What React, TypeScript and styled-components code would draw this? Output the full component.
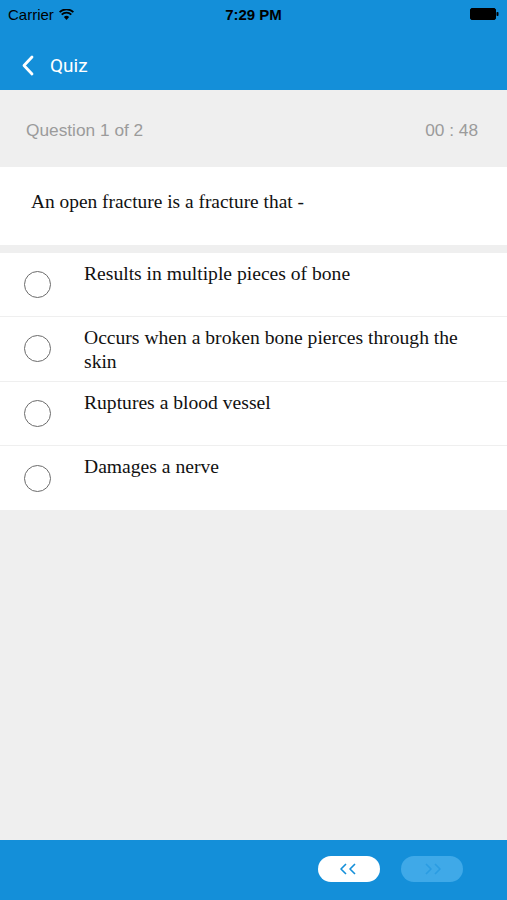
import React from "react";
import styled, { createGlobalStyle } from "styled-components";

const BLUE = "#148fd9";

const Global = createGlobalStyle`
  html, body { margin: 0; padding: 0; background: #efefef; }
  * { box-sizing: border-box; }
`;

const Screen = styled.div`
  width: 507px;
  height: 900px;
  display: flex;
  flex-direction: column;
  background: #efefef;
  overflow: hidden;
`;

const Header = styled.header`
  background: ${BLUE};
  height: 90px;
  display: flex;
  flex-direction: column;
`;

const StatusBar = styled.div`
  height: 28px;
  display: grid;
  grid-template-columns: 1fr auto 1fr;
  align-items: center;
  padding: 0 8px;
  font-family: "Liberation Sans", Arial, sans-serif;
  font-size: 15px;
  color: #000;
`;

const StatusLeft = styled.div`
  display: flex;
  align-items: center;
  gap: 5px;
`;

const StatusTime = styled.div`
  font-weight: bold;
`;

const StatusRight = styled.div`
  display: flex;
  justify-content: flex-end;
  align-items: center;
`;

const NavBar = styled.div`
  height: 62px;
  padding-top: 12px;
  display: flex;
  align-items: center;
  padding-left: 21px;
  gap: 16px;
`;

const NavTitle = styled.span`
  font-family: Roboto, "Liberation Sans", sans-serif;
  font-size: 19px;
  color: #fff;
`;

const InfoBand = styled.div`
  height: 77px;
  display: flex;
  align-items: center;
  justify-content: space-between;
  padding: 4px 29px 0 26px;
  font-family: "Liberation Sans", Arial, sans-serif;
  font-size: 17.3px;
  color: #9b9b9b;
`;

const QuestionBox = styled.div`
  background: #fff;
  height: 78px;
  display: flex;
  align-items: center;
  padding: 0 0 8px 31px;
  font-family: "Liberation Serif", "Times New Roman", serif;
  font-size: 19.4px;
  color: #111;
`;

const Options = styled.div`
  margin-top: 8px;
  background: #fff;
  display: flex;
  flex-direction: column;
`;

const OptionRow = styled.div<{ $last?: boolean }>`
  min-height: 64.3px;
  display: flex;
  align-items: center;
  border-bottom: ${(p) => (p.$last ? "none" : "1px solid #efefef")};
`;

const Radio = styled.span`
  width: 27px;
  height: 27px;
  border-radius: 50%;
  border: 1.5px solid #6b6b6b;
  margin-left: 24px;
  flex: none;
`;

const OptionText = styled.div`
  align-self: flex-start;
  padding: 9px 40px 6px 33px;
  font-family: "Liberation Serif", "Times New Roman", serif;
  font-size: 19.6px;
  line-height: 24px;
  color: #111;
`;

const Spacer = styled.div`
  flex: 1;
`;

const BottomBar = styled.footer`
  height: 60px;
  background: ${BLUE};
  display: flex;
  align-items: center;
  justify-content: flex-end;
  gap: 21px;
  padding: 0 44px 2px 0;
`;

const Pill = styled.button<{ $disabled?: boolean }>`
  width: 62px;
  height: 26px;
  border: none;
  border-radius: 13px;
  padding: 0;
  display: flex;
  align-items: center;
  justify-content: center;
  background: ${(p) => (p.$disabled ? "#3fa9e8" : "#ffffff")};
  color: ${(p) => (p.$disabled ? "#2a9ce2" : BLUE)};
`;

const Wifi = () => (
  <svg width="15" height="11" viewBox="0 0 15 11">
    <path d="M7.5 11 L4.9 8 A3.6 3.6 0 0 1 10.1 8 Z" fill="#000" />
    <path d="M2.7 5.6 A6.8 6.8 0 0 1 12.3 5.6" stroke="#000" strokeWidth="1.8" fill="none" />
    <path d="M0.6 3.2 A9.8 9.8 0 0 1 14.4 3.2" stroke="#000" strokeWidth="1.8" fill="none" />
  </svg>
);

const Battery = () => (
  <svg width="29" height="12" viewBox="0 0 29 12">
    <rect x="0.5" y="0.5" width="25" height="11" rx="1.5" fill="#000" stroke="#000" />
    <rect x="26.5" y="4" width="2" height="4" rx="0.8" fill="#000" />
  </svg>
);

const BackChevron = () => (
  <svg width="13" height="21" viewBox="0 0 13 21">
    <path d="M11 2 L3 10.5 L11 19" stroke="#fff" strokeWidth="2.8" fill="none" strokeLinecap="round" strokeLinejoin="round" />
  </svg>
);

const DoubleChevron = ({ dir }: { dir: "left" | "right" }) => (
  <svg width="20" height="12" viewBox="0 0 20 12" style={dir === "right" ? { transform: "scaleX(-1)" } : undefined}>
    <path d="M7 1 L2 6 L7 11" stroke="currentColor" strokeWidth="1.6" fill="none" strokeLinejoin="round" />
    <path d="M16 1 L11 6 L16 11" stroke="currentColor" strokeWidth="1.6" fill="none" strokeLinejoin="round" />
  </svg>
);

const options = [
  "Results in multiple pieces of bone",
  "Occurs when a broken bone pierces through the skin",
  "Ruptures a blood vessel",
  "Damages a nerve",
];

export default function App() {
  return (
    <>
      <Global />
      <Screen>
        <Header>
          <StatusBar>
            <StatusLeft>
              <span>Carrier</span>
              <Wifi />
            </StatusLeft>
            <StatusTime>7:29 PM</StatusTime>
            <StatusRight>
              <Battery />
            </StatusRight>
          </StatusBar>
          <NavBar>
            <BackChevron />
            <NavTitle>Quiz</NavTitle>
          </NavBar>
        </Header>
        <InfoBand>
          <span>Question 1 of 2</span>
          <span>00 : 48</span>
        </InfoBand>
        <QuestionBox>An open fracture is a fracture that -</QuestionBox>
        <Options>
          {options.map((o, i) => (
            <OptionRow key={o} $last={i === options.length - 1}>
              <Radio />
              <OptionText>{o}</OptionText>
            </OptionRow>
          ))}
        </Options>
        <Spacer />
        <BottomBar>
          <Pill>
            <DoubleChevron dir="left" />
          </Pill>
          <Pill $disabled>
            <DoubleChevron dir="right" />
          </Pill>
        </BottomBar>
      </Screen>
    </>
  );
}
